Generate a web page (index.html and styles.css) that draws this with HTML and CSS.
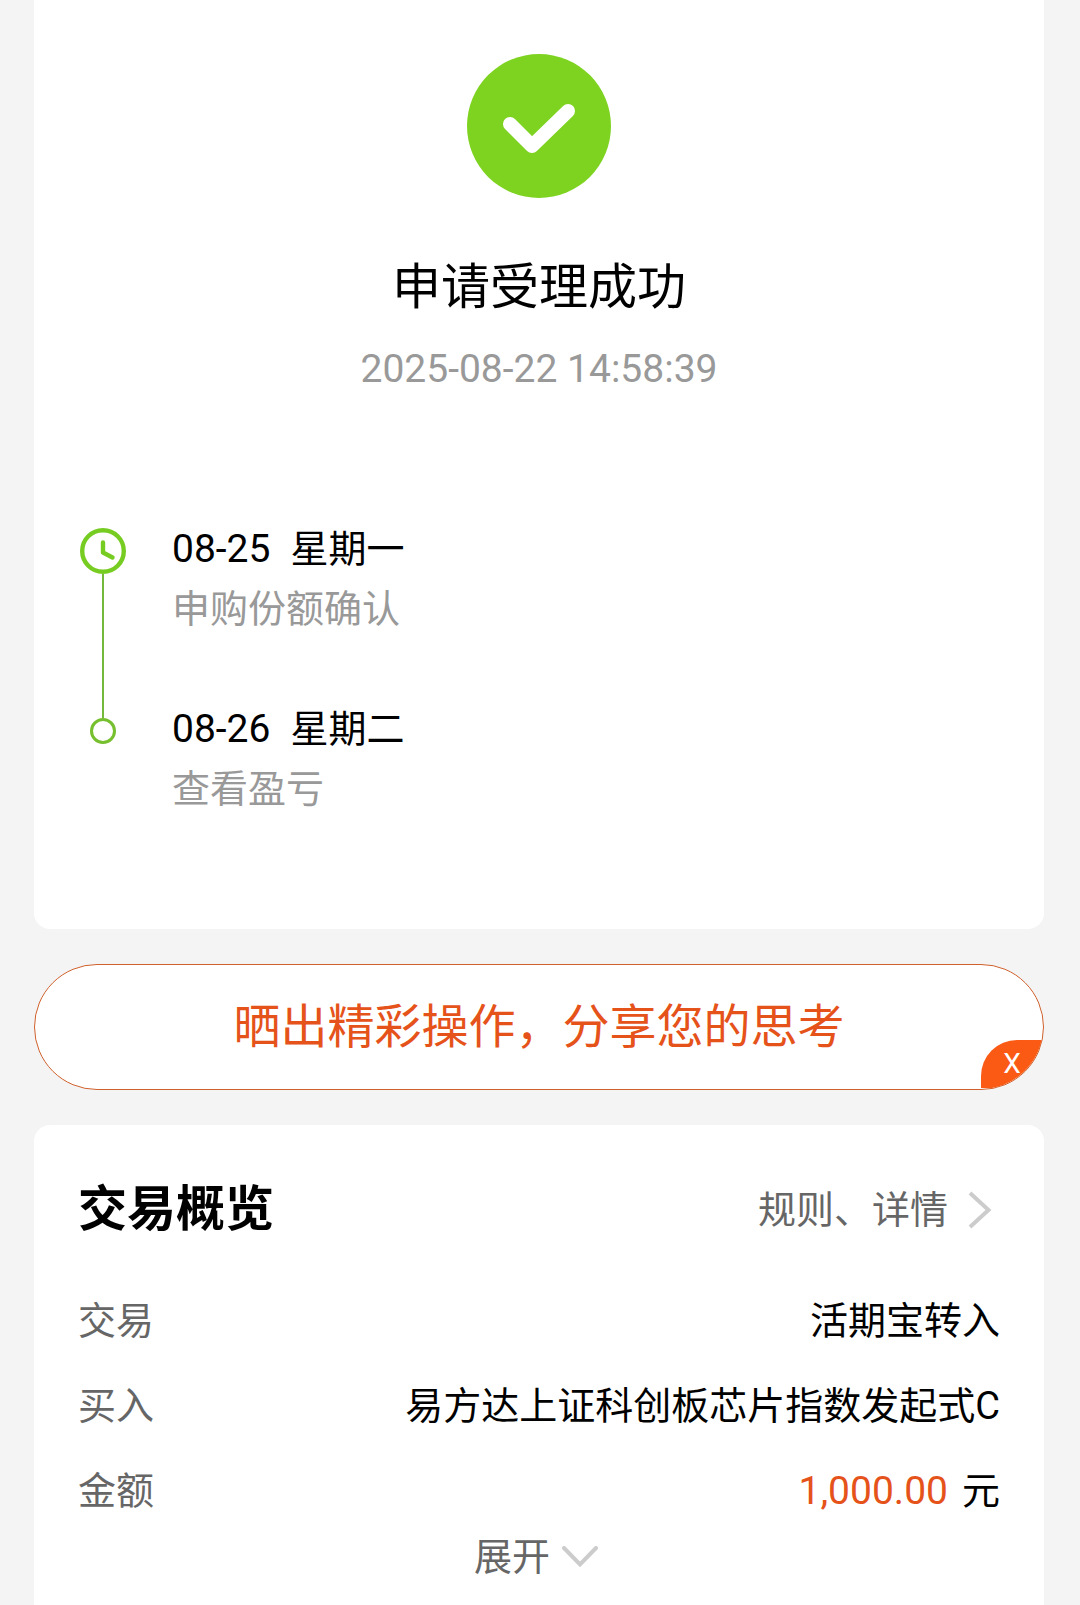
FILE: index.html
```html
<!DOCTYPE html>
<html lang="zh-CN">
<head>
    <meta charset="UTF-8">
    <meta name="viewport" content="width=device-width, initial-scale=1.0">
    <title>申请受理成功</title>
    <link rel="stylesheet" href="styles.css">
</head>
<body>
    <main class="page">
        <section class="card result">
            <svg class="result-icon" viewBox="0 0 144 144" aria-hidden="true">
                <circle cx="72" cy="72" r="72" fill="#7ed321"/>
                <path d="M43 70 L65 92 L101 57" fill="none" stroke="#fff" stroke-width="14" stroke-linecap="round" stroke-linejoin="round"/>
            </svg>
            <h1 class="result-title">申请受理成功</h1>
            <time class="result-time">2025-08-22 14:58:39</time>

            <ol class="timeline">
                <li class="step">
                    <div class="step-marker">
                        <svg class="icon-clock" viewBox="0 0 46 46" aria-hidden="true">
                            <circle cx="23" cy="23" r="20.800" fill="none" stroke="#77cc22" stroke-width="4.400"/>
                            <path d="M23 14.500 V24.500 L32.500 29.500" fill="none" stroke="#77cc22" stroke-width="4.400" stroke-linecap="round" stroke-linejoin="round"/>
                        </svg>
                        <span class="step-line"></span>
                    </div>
                    <div class="step-text">
                        <p class="step-date"><span class="num">08-25</span><span>星期一</span></p>
                        <p class="step-desc">申购份额确认</p>
                    </div>
                </li>
                <li class="step">
                    <div class="step-marker">
                        <span class="step-dot"></span>
                    </div>
                    <div class="step-text">
                        <p class="step-date"><span class="num">08-26</span><span>星期二</span></p>
                        <p class="step-desc">查看盈亏</p>
                    </div>
                </li>
            </ol>
        </section>

        <div class="share">
            <a class="share-link" href="#">晒出精彩操作，分享您的思考</a>
            <button class="share-close" type="button">X</button>
        </div>

        <section class="card overview">
            <div class="overview-header">
                <h2>交易概览</h2>
                <a class="overview-link" href="#">
                    规则、详情
                    <svg class="icon-right" viewBox="0 0 24 38" aria-hidden="true">
                        <path d="M2 2 L20.500 19 L2 36" fill="none" stroke="#cccccc" stroke-width="4"/>
                    </svg>
                </a>
            </div>

            <dl class="details">
                <div class="detail-row">
                    <dt>交易</dt>
                    <dd>活期宝转入</dd>
                </div>
                <div class="detail-row">
                    <dt>买入</dt>
                    <dd>易方达上证科创板芯片指数发起式C</dd>
                </div>
                <div class="detail-row">
                    <dt>金额</dt>
                    <dd><span class="num amount">1,000.00</span>元</dd>
                </div>
            </dl>

            <button class="expand-btn" type="button">
                展开
                <svg class="icon-down" viewBox="0 0 36 22" aria-hidden="true">
                    <path d="M2 2 L18 18.500 L34 2" fill="none" stroke="#cccccc" stroke-width="4" stroke-linecap="round"/>
                </svg>
            </button>
        </section>
    </main>
</body>
</html>
```
FILE: styles.css
```css
* {
    margin: 0;
    padding: 0;
    box-sizing: border-box;
}

body {
    background: #f4f4f4;
    color: #000;
    font-family: Roboto, "Noto Sans CJK SC", sans-serif;
    font-size: 38px;
    line-height: 48px;
}

a {
    color: inherit;
    text-decoration: none;
}

button {
    border: none;
    background: none;
    font: inherit;
    cursor: pointer;
}

.page {
    display: flex;
    flex-direction: column;
    gap: 35px;
    min-height: 100vh;
    padding: 0 36px 0 34px;
}

.card {
    background: #fff;
    border-radius: 16px;
}

.num {
    font-size: 39px;
}

/* Result */
.result {
    display: flex;
    flex-direction: column;
    align-items: center;
    padding: 54px 44px 116px;
    border-top-left-radius: 0;
    border-top-right-radius: 0;
}

.result-icon {
    width: 144px;
    height: 144px;
}

.result-title {
    margin-top: 60px;
    font-size: 49px;
    font-weight: 400;
    line-height: 60px;
}

.result-time {
    margin-top: 27px;
    font-size: 39px;
    color: #999;
}

/* Timeline */
.timeline {
    align-self: stretch;
    margin-top: 132px;
    list-style: none;
}

.step {
    display: flex;
    gap: 44px;
}

.step-marker {
    display: flex;
    flex-direction: column;
    align-items: center;
    width: 50px;
}

.icon-clock {
    width: 46px;
    height: 46px;
    margin-top: 3px;
}

.step-line {
    flex: 1;
    width: 2px;
    background: #74b83c;
}

/* short piece of line that joins the dot to the step above */
.step-marker::before {
    content: "";
    width: 2px;
    height: 13px;
    background: #74b83c;
}

.step:first-child .step-marker::before {
    display: none;
}

.step-dot {
    width: 26px;
    height: 26px;
    border: 3px solid #76bf2e;
    border-radius: 50%;
}

.step-text {
    display: flex;
    flex-direction: column;
    gap: 12px;
}

.step:not(:last-child) .step-text {
    padding-bottom: 72px;
}

.step-date {
    display: flex;
    align-items: baseline;
    gap: 20px;
}

.step-desc {
    color: #999;
}

/* Share banner */
.share {
    position: relative;
    overflow: hidden;
    border: 1px solid #d0602c;
    border-radius: 63px;
    background: #fff;
}

.share-link {
    display: block;
    padding: 32px 0;
    font-size: 47px;
    line-height: 60px;
    text-align: center;
    color: #e5521a;
}

.share-close {
    position: absolute;
    right: 0;
    bottom: 1px;
    width: 62px;
    height: 48px;
    border-top-left-radius: 36px;
    background: #fa5a14;
    color: #fff;
    font-size: 28px;
    line-height: 48px;
}

/* Overview */
.overview {
    flex: 1;
    display: flex;
    flex-direction: column;
    padding: 55px 44px 24px;
    border-bottom-left-radius: 0;
    border-bottom-right-radius: 0;
}

.overview-header {
    display: flex;
    justify-content: space-between;
    align-items: center;
}

.overview-header h2 {
    font-size: 49px;
    font-weight: 700;
    line-height: 60px;
}

.overview-link {
    display: flex;
    align-items: center;
    gap: 20px;
    padding-right: 8px;
    color: #666;
}

.icon-right {
    width: 24px;
    height: 38px;
}

.details {
    display: flex;
    flex-direction: column;
    gap: 37px;
    margin-top: 57px;
}

.detail-row {
    display: flex;
    justify-content: space-between;
}

.detail-row dt {
    color: #666;
}

.amount {
    margin-right: 14px;
    color: #e5521a;
}

.expand-btn {
    display: flex;
    align-items: center;
    align-self: center;
    gap: 12px;
    margin-top: 18px;
    padding-right: 6px;
    color: #666;
}

.icon-down {
    width: 36px;
    height: 22px;
}
```
